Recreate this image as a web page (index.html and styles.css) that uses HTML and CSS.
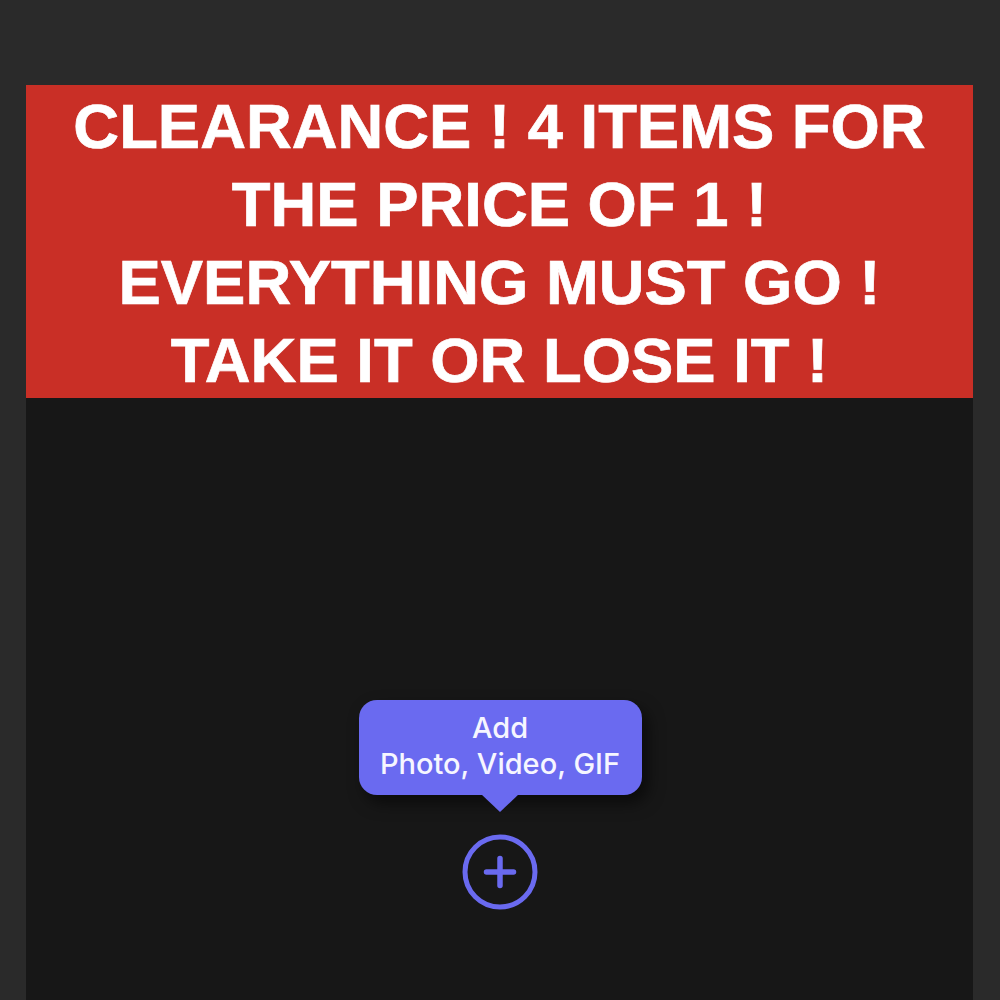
FILE: index.html
```html
<!DOCTYPE html>
<html lang="en">

<head>
  <meta charset="UTF-8">
  <title>Clearance</title>
  <link rel="stylesheet" href="styles.css">
</head>

<body>
  <div class="panel">
    <div class="banner">
      CLEARANCE ! 4 ITEMS FOR<br>
      THE PRICE OF 1 !<br>
      EVERYTHING MUST GO !<br>
      TAKE IT OR LOSE IT !
    </div>
    <div class="composer">
      <div class="tip">Add<br>Photo, Video, GIF</div>
      <svg class="add" viewBox="0 0 76 76" width="76" height="76">
        <circle cx="38" cy="38" r="35" fill="none" stroke="#6a6af0" stroke-width="5"/>
        <path d="M38 24.5V51.5M24.5 38H51.5" fill="none" stroke="#6a6af0" stroke-width="5.5" stroke-linecap="round"/>
      </svg>
    </div>
  </div>
</body>

</html>
```

FILE: styles.css
```css
* {
  margin: 0;
  padding: 0;
  box-sizing: border-box;
}

body {
  background: #2a2a2a;
  height: 1000px;
  overflow: hidden;
  padding: 85px 27px 0 26px;
}

.panel {
  height: 915px;
  background: #171717;
}

.banner {
  height: 313px;
  padding-top: 2px;
  background: #c92f26;
  color: #fff;
  font-family: "Liberation Sans", Arial, sans-serif;
  font-weight: bold;
  font-size: 63.4px;
  line-height: 78px;
  text-align: center;
  -webkit-text-stroke: 0.7px #fff;
}

.composer {
  display: flex;
  flex-direction: column;
  align-items: center;
  padding-top: 302px;
}

.tip {
  position: relative;
  width: 283px;
  height: 95px;
  margin-left: 1px;
  padding-top: 10px;
  background: #6a6af0;
  border-radius: 18px;
  box-shadow: 6px 8px 16px rgba(0, 0, 0, 0.55);
  color: #f6f6ff;
  font-family: Inter, "Noto Sans", sans-serif;
  font-weight: 500;
  font-size: 29px;
  line-height: 36px;
  text-align: center;
}

.tip:after {
  content: '';
  position: absolute;
  left: 50%;
  bottom: -17px;
  margin-left: -19px;
  border-left: 19px solid transparent;
  border-right: 19px solid transparent;
  border-top: 18px solid #6a6af0;
}

.add {
  display: block;
  margin-top: 39px;
}
```
